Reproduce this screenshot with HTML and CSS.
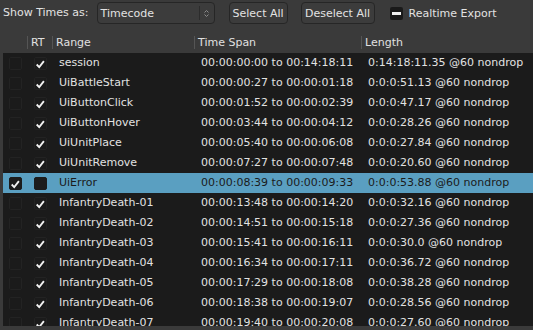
FILE: index.html
```html
<!DOCTYPE html>
<html lang="en">
<head>
<meta charset="UTF-8" />
<title>Export Ranges</title>
<link rel="stylesheet" href="styles.css">
</head>
<body>

<div class="toolbar">
  <span class="label">Show Times as:</span>
  <div class="combo">
    <span class="combo-text">Timecode</span>
    <span class="combo-arrows">
      <svg width="7" height="9" viewBox="0 0 7 9"><polyline points="1.5,3.5 3.5,1.5 5.5,3.5" /><polyline points="1.5,5.5 3.5,7.5 5.5,5.5" /></svg>
    </span>
  </div>
  <button class="btn btn-select">Select All</button>
  <button class="btn btn-deselect">Deselect All</button>
  <label class="toggle"><span class="toggle-box"><span class="dash"></span></span>Realtime Export</label>
</div>

<div class="table">
  <div class="thead">
    <div class="th"></div>
    <div class="th sep">RT</div>
    <div class="th sep">Range</div>
    <div class="th sep">Time Span</div>
    <div class="th sep">Length</div>
  </div>
  <div class="tbody" id="rows"></div>
</div>
<div class="bottom"></div>

<script>
  (function(){
    const rows = [
      ['session', '00:00:00:00 to 00:14:18:11', '0:14:18:11.35 @60 nondrop'],
      ['UiBattleStart', '00:00:00:27 to 00:00:01:18', '0:0:0:51.13 @60 nondrop'],
      ['UiButtonClick', '00:00:01:52 to 00:00:02:39', '0:0:0:47.17 @60 nondrop'],
      ['UiButtonHover', '00:00:03:44 to 00:00:04:12', '0:0:0:28.26 @60 nondrop'],
      ['UiUnitPlace', '00:00:05:40 to 00:00:06:08', '0:0:0:27.84 @60 nondrop'],
      ['UiUnitRemove', '00:00:07:27 to 00:00:07:48', '0:0:0:20.60 @60 nondrop'],
      ['UiError', '00:00:08:39 to 00:00:09:33', '0:0:0:53.88 @60 nondrop', true],
      ['InfantryDeath-01', '00:00:13:48 to 00:00:14:20', '0:0:0:32.16 @60 nondrop'],
      ['InfantryDeath-02', '00:00:14:51 to 00:00:15:18', '0:0:0:27.36 @60 nondrop'],
      ['InfantryDeath-03', '00:00:15:41 to 00:00:16:11', '0:0:0:30.0 @60 nondrop'],
      ['InfantryDeath-04', '00:00:16:34 to 00:00:17:11', '0:0:0:36.72 @60 nondrop'],
      ['InfantryDeath-05', '00:00:17:29 to 00:00:18:08', '0:0:0:38.28 @60 nondrop'],
      ['InfantryDeath-06', '00:00:18:38 to 00:00:19:07', '0:0:0:28.56 @60 nondrop'],
      ['InfantryDeath-07', '00:00:19:40 to 00:00:20:08', '0:0:0:27.60 @60 nondrop']
    ];
    const check = '<svg width="13" height="13" viewBox="0 0 13 13"><polyline points="2,6.5 5,9.5 10.5,2.5" /></svg>';
    const list = document.getElementById('rows');
    rows.forEach(r => {
      const sel = r[3];
      const row = document.createElement('div');
      row.className = 'tr' + (sel ? ' selected' : '');
      row.innerHTML =
        '<div class="td td-sel"><span class="box' + (sel ? ' on' : '') + '">' + (sel ? check : '') + '</span></div>' +
        '<div class="td td-rt"><span class="box' + (sel ? ' on' : '') + '">' + (sel ? '' : check) + '</span></div>' +
        '<div class="td">' + r[0] + '</div>' +
        '<div class="td">' + r[1] + '</div>' +
        '<div class="td">' + r[2] + '</div>';
      list.appendChild(row);
    });
  })();
</script>
</body>
</html>
```

FILE: styles.css
```css
* {
  margin: 0; padding: 0; box-sizing: border-box;
}
html, body {
  width: 100%;
  height: 100%;
  overflow: hidden;
  background: #3a3a3a;
  color: #e2e2e2;
  font-family: 'DejaVu Sans', sans-serif;
  font-size: 11px;
}

.toolbar {
  height: 31px;
  display: flex;
  align-items: flex-start;
  padding: 2px 0 0 3px;
  white-space: nowrap;
}
.label {
  line-height: 22px;
  margin-right: 8px;
}
.combo {
  width: 118px;
  height: 22px;
  border: 1px solid #262626;
  border-radius: 4px;
  background: #3c3c3c;
  display: flex;
  align-items: center;
  padding-left: 3px;
  margin-right: 14px;
}
.combo-text {
  flex: 1;
}
.combo-arrows {
  width: 15px;
  height: 14px;
  border-left: 1px solid #2c2c2c;
  display: flex;
  align-items: center;
  justify-content: center;
}
.combo-arrows svg polyline {
  fill: none;
  stroke: #8c8c8c;
  stroke-width: 1;
}
.btn {
  height: 22px;
  padding: 0 3px;
  border: 1px solid #262626;
  border-radius: 4px;
  background: #3c3c3c;
  color: #e2e2e2;
  font: inherit;
  white-space: nowrap;
}
.btn-select {
  width: 59px;
  margin-right: 13px;
}
.btn-deselect {
  width: 74px;
  margin-right: 15px;
}
.toggle {
  display: flex;
  align-items: center;
  height: 22px;
  gap: 6px;
}
.toggle-box {
  width: 13px;
  height: 13px;
  border-radius: 2px;
  background: #1a1a1a;
  display: flex;
  align-items: center;
  justify-content: center;
}
.dash {
  width: 9px;
  height: 3px;
  background: #f0f0f0;
}

.thead {
  height: 22px;
  display: grid;
  grid-template-columns: 27px 25px 142px 167px 1fr;
  align-items: center;
}
.th {
  height: 13px;
  line-height: 13px;
  padding-left: 3px;
  color: #e0e0e0;
}
.th.sep {
  border-left: 1px solid #555;
}

.tbody {
  margin-left: 3px;
  height: 273px;
  overflow: hidden;
  background: #1b1b1b;
}
.tr {
  height: 20px;
  display: grid;
  grid-template-columns: 24px 25px 142px 167px 1fr;
  align-items: center;
  white-space: nowrap;
}
.tr.selected {
  background: #5a9fc1;
  color: #1b1b1b;
}
.td {
  padding-left: 7px;
  line-height: 20px;
  overflow: hidden;
}
.td-sel {
  padding-left: 6px;
  display: flex;
  align-items: center;
}
.td-rt {
  display: flex;
  align-items: center;
}
.box {
  width: 13px;
  height: 13px;
  border: 1px solid #232323;
  border-radius: 2px;
  display: flex;
}
.box svg polyline {
  fill: none;
  stroke: #f2f2f2;
  stroke-width: 2.2;
}
.box.on {
  background: #1c1c1c;
  border-color: #1c1c1c;
}
.bottom {
  height: 4px;
}
```
